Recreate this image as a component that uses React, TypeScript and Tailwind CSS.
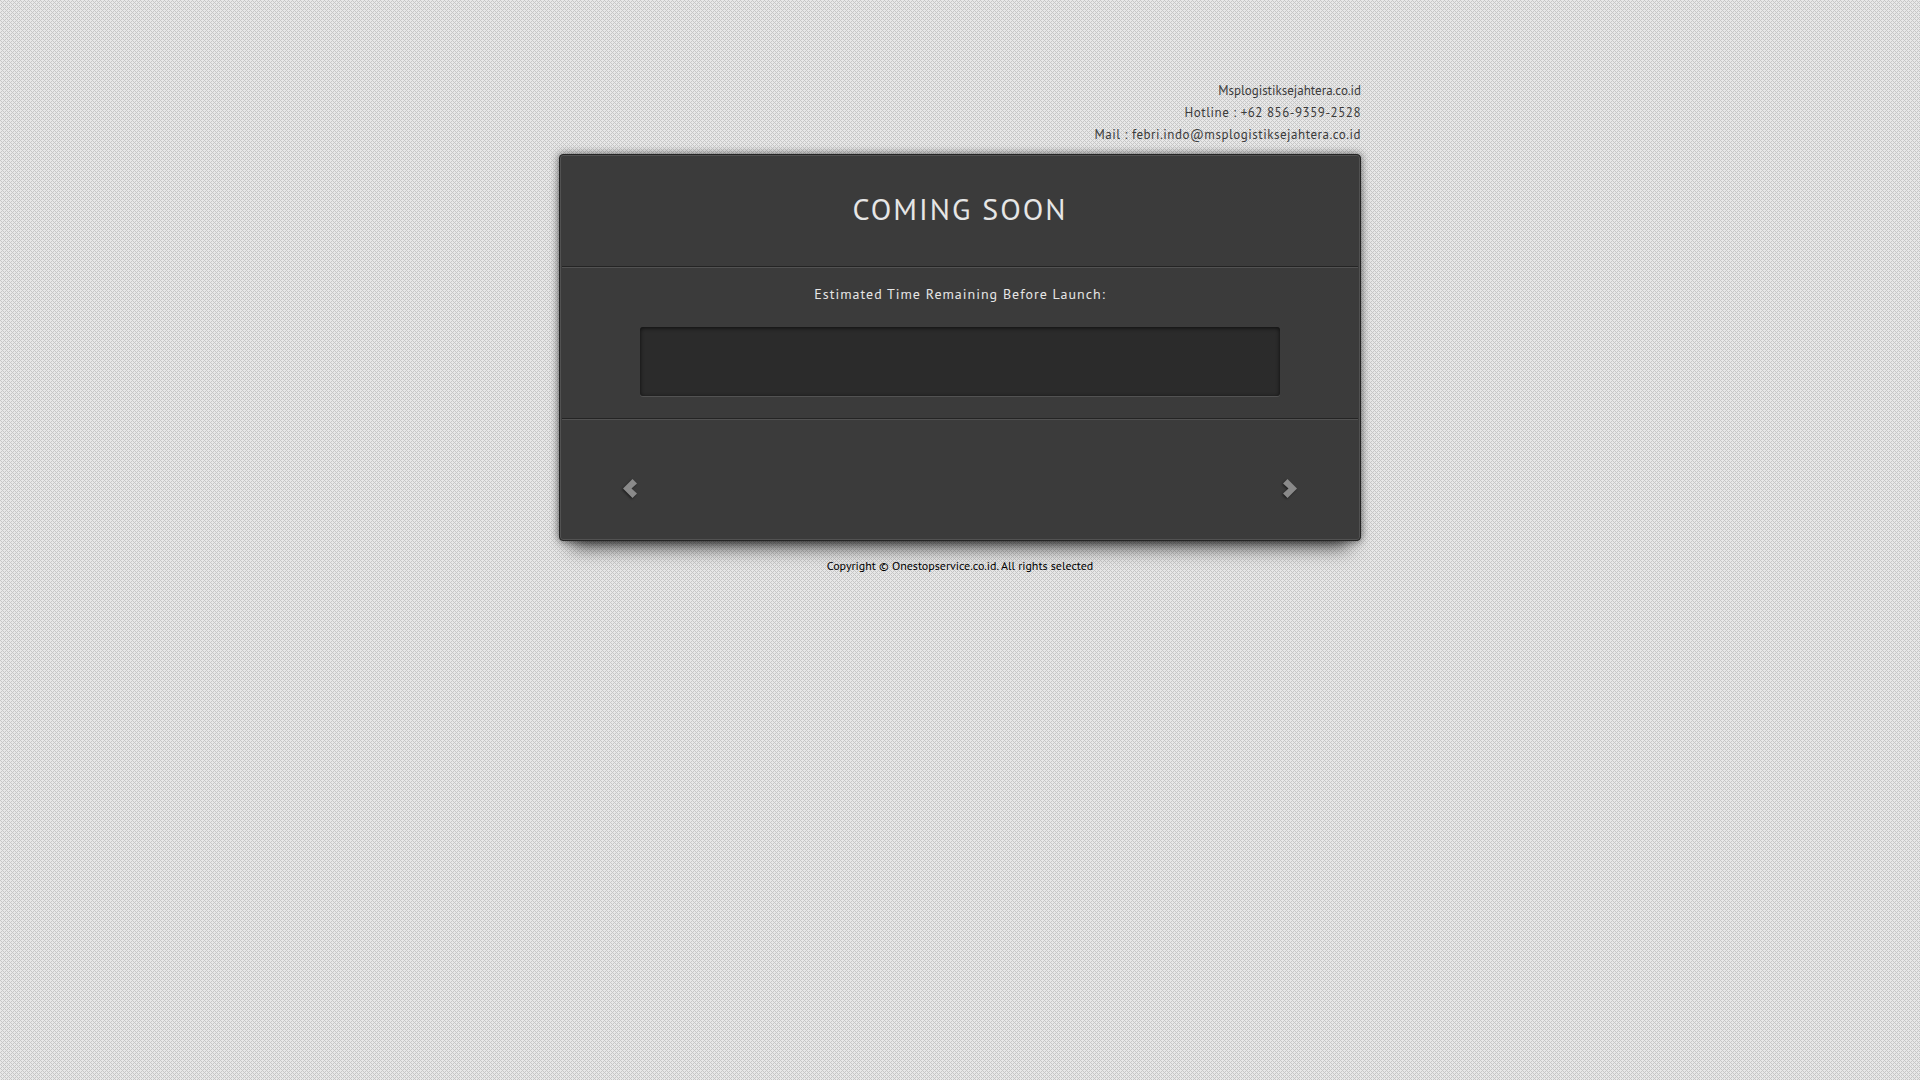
import React from 'react'

const Divider = () => (
    <div className="h-[2px] border-t border-[#242424] bg-[#525252]" />
)

const Chevron = ({ d }: { d: string }) => (
    <svg width="14" height="19" viewBox="0 0 14 19" fill="#8a8a8a" className="drop-shadow-[-1px_1px_1px_rgba(0,0,0,0.5)]">
        <path d={d} />
    </svg>
)

const App = () => {
    return (
        <div className="relative min-h-screen bg-[#e8e8e8] px-4 pt-[80px] font-['PT_Sans','Lato',sans-serif]">
            <svg className="absolute inset-0 h-full w-full" aria-hidden="true">
                <defs>
                    <pattern id="weave" width="4" height="4" patternUnits="userSpaceOnUse">
                        <path d="M0 0h1v1h-1zM1 1h1v1h-1zM3 1h1v1h-1zM2 2h1v1h-1zM1 3h1v1h-1zM3 3h1v1h-1z" fill="#c7c7c7" shapeRendering="crispEdges" />
                    </pattern>
                </defs>
                <rect width="100%" height="100%" fill="url(#weave)" />
            </svg>
            <div className="relative mx-auto max-w-[802px]">
                <header className="pb-[8px] text-right text-[13px] leading-[22px] text-[#3b3b3b]">
                    <p>Msplogistiksejahtera.co.id</p>
                    <p className="tracking-[0.04em]">Hotline : +62 856-9359-2528</p>
                    <p className="tracking-[0.04em]">Mail : febri.indo@msplogistiksejahtera.co.id</p>
                </header>
                <main className="rounded-[4px] border border-[#242424] bg-[#3b3b3b] p-px text-center text-[#e6e6e6] shadow-[inset_0_0_0_1px_#525252,0_0_8px_rgba(0,0,0,0.6),0_18px_18px_-12px_rgba(0,0,0,0.7)]">
                    <div className="px-px">
                        <h1 className="pt-[32px] pb-[36px] text-[30px] leading-[42px] tracking-[2px]">COMING SOON</h1>
                        <Divider />
                        <section className="px-[78px] pt-[15px] pb-[22px]">
                            <h2 className="text-[14px] leading-[22px] tracking-[1px]">Estimated Time Remaining Before Launch:</h2>
                            <div className="mt-[22px] h-[69px] rounded-[3px] bg-[#2b2b2b] shadow-[inset_0_1px_4px_rgba(0,0,0,0.7),0_1px_0_#525252]" />
                        </section>
                        <Divider />
                        <nav className="flex justify-between px-[61px] pt-[59px] pb-[41px]">
                            <button aria-label="Previous">
                                <Chevron d="M0 9.5L9.5 0L14 4.5L8.5 9.5L14 14.5L9.5 19Z" />
                            </button>
                            <button aria-label="Next">
                                <Chevron d="M14 9.5L4.5 0L0 4.5L5.5 9.5L0 14.5L4.5 19Z" />
                            </button>
                        </nav>
                    </div>
                </main>
                <footer className="pt-[14px] text-center text-[12px] leading-[22px] text-black">
                    Copyright © Onestopservice.co.id. All rights selected
                </footer>
            </div>
        </div>
    )
}

export default App
